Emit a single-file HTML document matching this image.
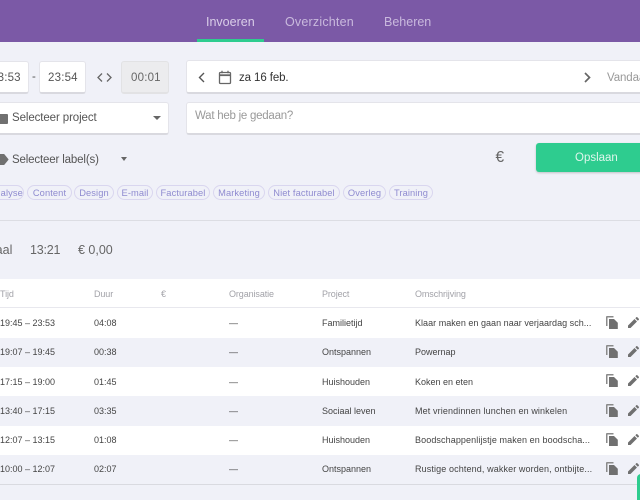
<!DOCTYPE html>
<html><head><meta charset="utf-8">
<style>
*{box-sizing:border-box;margin:0;padding:0}
html,body{width:640px;height:500px;overflow:hidden;background:#f0f1f8}
body{font-family:"Liberation Sans",sans-serif;position:relative}
#w{position:absolute;inset:0;filter:blur(.3px)}
.a{position:absolute}
.t{position:absolute;white-space:nowrap;line-height:20px;height:20px}
.box{position:absolute;background:#fff;border:1px solid #e4e4ea;border-bottom:2px solid #d9d9df;border-radius:3px}
.tag{position:absolute;top:185px;height:15px;border:1px solid #d9d6ef;border-radius:8px;color:#8f8bd0;font-size:9.3px;line-height:14px;text-align:center;white-space:nowrap;letter-spacing:.1px}
.row{position:absolute;left:0;width:640px}
.c{position:absolute;font-size:9px;color:#444;white-space:nowrap;line-height:14px}
.h{position:absolute;top:287px;font-size:9px;color:#a2a2a8;line-height:14px;letter-spacing:-.1px}
svg{position:absolute;display:block}
</style></head><body><div id="w">
<div class="a" style="left:0;top:0;width:640px;height:42px;background:#7b59a6"></div>
<div class="t" style="left:206px;top:12px;font-size:12.5px;color:#d9cde8">Invoeren</div>
<div class="t" style="left:285px;top:12px;font-size:12.5px;color:#c9b9dd;letter-spacing:.2px">Overzichten</div>
<div class="t" style="left:384px;top:12px;font-size:12.5px;color:#c9b9dd">Beheren</div>
<div class="a" style="left:197px;top:39px;width:67px;height:3px;background:#2ecc8f"></div>

<div class="box" style="left:-10px;top:61px;width:39px;height:33px"></div>
<div class="t" style="left:-9px;top:68px;font-size:11.5px;color:#555;letter-spacing:.2px">23:53</div>
<div class="t" style="left:32px;top:67px;font-size:11.5px;color:#555">-</div>
<div class="box" style="left:39px;top:61px;width:47px;height:33px"></div>
<div class="t" style="left:48px;top:68px;font-size:11.5px;color:#555;letter-spacing:.2px">23:54</div>
<svg style="left:97px;top:71px" width="15" height="13" viewBox="0 0 15 13" fill="none" stroke="#666" stroke-width="1.3"><path d="M5 2.500 1 6.500l4 4M10 2.500l4 4-4 4"/></svg>
<div class="box" style="left:121px;top:61px;width:48px;height:33px;background:#ececee;border-color:#e2e2e4"></div>
<div class="t" style="left:131px;top:68px;font-size:11.5px;color:#666;letter-spacing:.2px">00:01</div>

<div class="box" style="left:186px;top:60px;width:470px;height:34px"></div>
<svg style="left:197px;top:71px" width="9" height="13" viewBox="0 0 9 13" fill="none" stroke="#555" stroke-width="1.4"><path d="M7 2 2.500 6.500 7 11"/></svg>
<svg style="left:218px;top:70px" width="14" height="15" viewBox="0 0 14 15" fill="none" stroke="#666" stroke-width="1.3"><rect x="1.500" y="2.500" width="11" height="11" rx="1"/><path d="M1.500 5.200h11" stroke-width="1.800"/><path d="M4 .8v2.400M10 .8v2.400"/></svg>
<div class="t" style="left:239px;top:67.500px;font-size:11.5px;color:#333;letter-spacing:-.1px">za 16 feb.</div>
<svg style="left:583px;top:71px" width="9" height="13" viewBox="0 0 9 13" fill="none" stroke="#666" stroke-width="1.700"><path d="M2 2l4.500 4.500L2 11"/></svg>
<div class="t" style="left:607px;top:68px;font-size:11.5px;color:#999;letter-spacing:-.1px">Vandaag</div>

<div class="box" style="left:-10px;top:102px;width:179px;height:33px"></div>
<div class="a" style="left:-3px;top:114px;width:11px;height:10px;background:#707070;border-radius:1px"></div>
<div class="t" style="left:12px;top:108px;font-size:11.5px;color:#555;letter-spacing:-.1px">Selecteer project</div>
<div class="a" style="left:153px;top:116px;border:4px solid transparent;border-top:4px solid #666;border-bottom:0"></div>
<div class="box" style="left:186px;top:102px;width:470px;height:33px"></div>
<div class="t" style="left:195px;top:105.500px;font-size:11.5px;color:#999;letter-spacing:-.25px">Wat heb je gedaan?</div>

<svg style="left:-4px;top:154px" width="13" height="11" viewBox="0 0 13 11"><path d="M0 0h7.500L12 5.500 7.500 11H0z" fill="#707070" stroke="#707070" stroke-linejoin="round"/></svg>
<div class="t" style="left:12px;top:150px;font-size:11.5px;color:#555;letter-spacing:-.15px">Selecteer label(s)</div>
<div class="a" style="left:120.500px;top:157px;border:3.500px solid transparent;border-top:4px solid #666;border-bottom:0"></div>
<div class="t" style="left:495.500px;top:148px;font-size:15.500px;color:#666">€</div>
<div class="a" style="left:536px;top:143px;width:120px;height:29px;background:#2ecc8f;border-radius:3px;box-shadow:0 1px 2px rgba(0,0,0,.2)"></div>
<div class="t" style="left:575px;top:148px;font-size:11.5px;color:#def6ec">Opslaan</div>

<div class="tag" style="left:-18px;width:42px;padding-left:6px">Analyse</div>
<div class="tag" style="left:27px;width:45px">Content</div>
<div class="tag" style="left:74px;width:40px">Design</div>
<div class="tag" style="left:117px;width:36px">E-mail</div>
<div class="tag" style="left:156px;width:54px">Facturabel</div>
<div class="tag" style="left:213px;width:52px">Marketing</div>
<div class="tag" style="left:268px;width:72px">Niet facturabel</div>
<div class="tag" style="left:343px;width:43px">Overleg</div>
<div class="tag" style="left:389px;width:44px">Training</div>

<div class="a" style="left:0;top:220px;width:640px;height:1px;background:#dcdde3"></div>
<div class="t" style="left:-21px;top:240px;font-size:12.5px;color:#666">Totaal</div>
<div class="t" style="left:30px;top:240px;font-size:12.5px;color:#666;letter-spacing:-.2px">13:21</div>
<div class="t" style="left:78px;top:240px;font-size:12.5px;color:#666">€ 0,00</div>

<div class="row" style="top:279px;height:29px;background:#fff;border-bottom:1px solid #e8e8ee"></div>
<div class="h" style="left:0">Tijd</div><div class="h" style="left:94px">Duur</div><div class="h" style="left:161px">€</div><div class="h" style="left:229px">Organisatie</div><div class="h" style="left:322px">Project</div><div class="h" style="left:415px">Omschrijving</div>

<div class="row" style="top:308px;height:30px;background:#fff"></div>
<div class="row" style="top:367px;height:29px;background:#fff"></div>
<div class="row" style="top:426px;height:29px;background:#fff"></div>
<div class="row" style="top:484px;height:1px;background:#d9dae0"></div>

<div class="c" style="left:0;top:316px">19:45 – 23:53</div><div class="c" style="left:94px;top:316px">04:08</div><div class="c" style="left:229px;top:316px">—</div><div class="c" style="left:322px;top:316px">Familietijd</div><div class="c" style="left:415px;top:316px;letter-spacing:.03px">Klaar maken en gaan naar verjaardag sch...</div>
<div class="c" style="left:0;top:345px">19:07 – 19:45</div><div class="c" style="left:94px;top:345px">00:38</div><div class="c" style="left:229px;top:345px">—</div><div class="c" style="left:322px;top:345px">Ontspannen</div><div class="c" style="left:415px;top:345px">Powernap</div>
<div class="c" style="left:0;top:375px">17:15 – 19:00</div><div class="c" style="left:94px;top:375px">01:45</div><div class="c" style="left:229px;top:375px">—</div><div class="c" style="left:322px;top:375px">Huishouden</div><div class="c" style="left:415px;top:375px">Koken en eten</div>
<div class="c" style="left:0;top:404px">13:40 – 17:15</div><div class="c" style="left:94px;top:404px">03:35</div><div class="c" style="left:229px;top:404px">—</div><div class="c" style="left:322px;top:404px">Sociaal leven</div><div class="c" style="left:415px;top:404px;letter-spacing:.12px">Met vriendinnen lunchen en winkelen</div>
<div class="c" style="left:0;top:433px">12:07 – 13:15</div><div class="c" style="left:94px;top:433px">01:08</div><div class="c" style="left:229px;top:433px">—</div><div class="c" style="left:322px;top:433px">Huishouden</div><div class="c" style="left:415px;top:433px;letter-spacing:.1px">Boodschappenlijstje maken en boodscha...</div>
<div class="c" style="left:0;top:462px">10:00 – 12:07</div><div class="c" style="left:94px;top:462px">02:07</div><div class="c" style="left:229px;top:462px">—</div><div class="c" style="left:322px;top:462px">Ontspannen</div><div class="c" style="left:415px;top:462px;letter-spacing:.12px">Rustige ochtend, wakker worden, ontbijte...</div>

<svg style="left:0;top:0" width="640" height="500" viewBox="0 0 640 500">
<g fill="#707070">
<g transform="translate(606,316)"><path d="M1 0h6.500v1.500H1.500V10H0V1a1 1 0 0 1 1-1z" fill="#8a8a8a"/><path d="M3 3h5l3.800 3.800V13H3z"/></g>
<g transform="translate(606,345)"><path d="M1 0h6.500v1.500H1.500V10H0V1a1 1 0 0 1 1-1z" fill="#8a8a8a"/><path d="M3 3h5l3.800 3.800V13H3z"/></g>
<g transform="translate(606,374)"><path d="M1 0h6.500v1.500H1.500V10H0V1a1 1 0 0 1 1-1z" fill="#8a8a8a"/><path d="M3 3h5l3.800 3.800V13H3z"/></g>
<g transform="translate(606,404)"><path d="M1 0h6.500v1.500H1.500V10H0V1a1 1 0 0 1 1-1z" fill="#8a8a8a"/><path d="M3 3h5l3.800 3.800V13H3z"/></g>
<g transform="translate(606,433)"><path d="M1 0h6.500v1.500H1.500V10H0V1a1 1 0 0 1 1-1z" fill="#8a8a8a"/><path d="M3 3h5l3.800 3.800V13H3z"/></g>
<g transform="translate(606,462)"><path d="M1 0h6.500v1.500H1.500V10H0V1a1 1 0 0 1 1-1z" fill="#8a8a8a"/><path d="M3 3h5l3.800 3.800V13H3z"/></g>
<g transform="translate(628,317)"><path d="M0 8.500V11h2.500L9 4.500 6.500 2zM7.300 1.200l2.500 2.500 1-1c.3-.3.300-.7 0-1L9.300.2c-.3-.3-.7-.3-1 0z"/></g>
<g transform="translate(628,346)"><path d="M0 8.500V11h2.500L9 4.500 6.500 2zM7.300 1.200l2.500 2.500 1-1c.3-.3.300-.7 0-1L9.300.2c-.3-.3-.7-.3-1 0z"/></g>
<g transform="translate(628,375)"><path d="M0 8.500V11h2.500L9 4.500 6.500 2zM7.300 1.200l2.500 2.500 1-1c.3-.3.300-.7 0-1L9.300.2c-.3-.3-.7-.3-1 0z"/></g>
<g transform="translate(628,405)"><path d="M0 8.500V11h2.500L9 4.500 6.500 2zM7.300 1.200l2.500 2.500 1-1c.3-.3.300-.7 0-1L9.300.2c-.3-.3-.7-.3-1 0z"/></g>
<g transform="translate(628,434)"><path d="M0 8.500V11h2.500L9 4.500 6.500 2zM7.300 1.200l2.500 2.500 1-1c.3-.3.300-.7 0-1L9.300.2c-.3-.3-.7-.3-1 0z"/></g>
<g transform="translate(628,463)"><path d="M0 8.500V11h2.500L9 4.500 6.500 2zM7.300 1.200l2.500 2.500 1-1c.3-.3.300-.7 0-1L9.300.2c-.3-.3-.7-.3-1 0z"/></g>
</g>
</svg>
<div class="a" style="left:637px;top:474px;width:20px;height:40px;background:#2ecc8f;border-radius:4px"></div>
</div></body></html>
